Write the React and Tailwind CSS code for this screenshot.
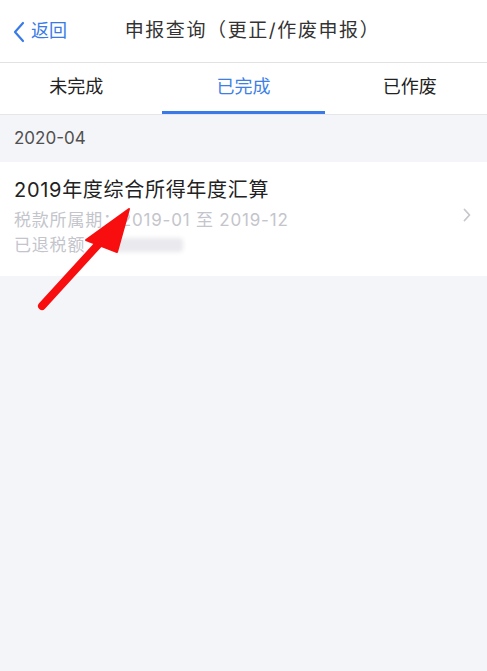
import React from 'react';

export default function App() {
    return (
        <div className="relative w-[487px] h-[671px] overflow-hidden bg-[#f4f5f9] font-['Inter','Noto_Sans_CJK_SC',sans-serif]">
            {/* nav bar */}
            <div className="relative flex items-center h-[63px] bg-white border-b border-[#e2e2e6]">
                <div className="flex items-center pl-[13px] text-[#3a7ae8]">
                    <svg width="12" height="22" viewBox="0 0 12 22" className="mt-[1px]">
                        <path d="M10 2 L2 11 L10 20" fill="none" stroke="#3a7ae8" strokeWidth="2.2" strokeLinecap="round" strokeLinejoin="round" />
                    </svg>
                    <span className="ml-[6px] text-[18px] leading-none">返回</span>
                </div>
                <div className="absolute left-0 right-0 text-center text-[19px] text-[#333] tracking-[1.6px] pointer-events-none">
                    <span className="ml-[18px]">申报查询（更正/作废申报）</span>
                </div>
            </div>

            {/* tabs */}
            <div className="grid grid-cols-3 h-[52px] bg-white border-b border-[#e6e6ea]">
                <div className="flex items-center justify-center pb-[5px] pr-[10px] text-[18px] text-[#222]">未完成</div>
                <div className="relative flex items-center justify-center pb-[5px] text-[18px] text-[#3d7fe6]">
                    已完成
                    <div className="absolute left-0 right-0 bottom-0 h-[3px] bg-[#3a7ae8]" />
                </div>
                <div className="flex items-center justify-center pb-[5px] pl-[8px] text-[18px] text-[#222]">已作废</div>
            </div>

            {/* month header */}
            <div className="h-[47px] flex items-center px-[14px] text-[17px] text-[#505050]">2020-04</div>

            {/* record */}
            <div className="flex items-center bg-white pl-[14px] pr-[16px] pt-[14px] pb-[19px]">
                <div className="flex-1 flex flex-col">
                    <div className="text-[20px] leading-[28px] tracking-[0.7px] text-[#222]">2019年度综合所得年度汇算</div>
                    <div className="mt-[3px] text-[17px] leading-[26px] tracking-[0.8px] text-[#c4c5cc]">税款所属期：2019-01 至 2019-12</div>
                    <div className="flex items-center text-[17px] leading-[24px] tracking-[0.8px] text-[#c4c5cc]">
                        已退税额：
                        <span className="ml-[10px] w-[70px] h-[14px] rounded bg-[#e9e9ee] blur-[2px]" />
                    </div>
                </div>
                <svg width="8" height="14" viewBox="0 0 8 14" className="mb-[4px]">
                    <path d="M1.5 1.5 L6.5 7 L1.5 12.5" fill="none" stroke="#c7c7cc" strokeWidth="1.8" strokeLinecap="round" strokeLinejoin="round" />
                </svg>
            </div>

            {/* red annotation arrow */}
            <svg className="absolute left-0 top-0 pointer-events-none" width="487" height="671" viewBox="0 0 487 671">
                <line x1="42" y1="306" x2="106" y2="236" stroke="#f80e0e" strokeWidth="8" strokeLinecap="round" />
                <polygon points="129,209 86,240 117,252" fill="#f80e0e" stroke="#f80e0e" strokeWidth="2" strokeLinejoin="round" />
            </svg>
        </div>
    );
}
